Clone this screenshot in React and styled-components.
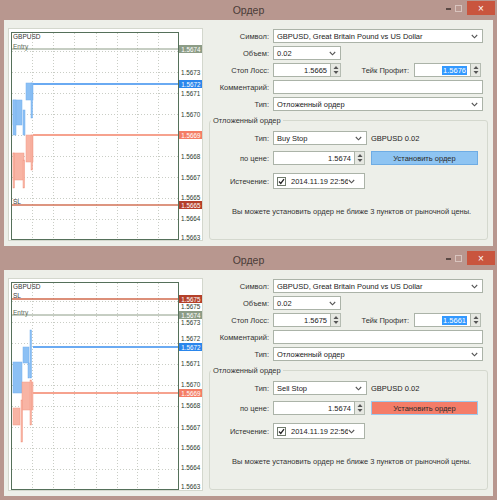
import React from "react";
import styled, { createGlobalStyle } from "styled-components";

const GlobalStyle = createGlobalStyle`
  html, body { margin: 0; padding: 0; background: #b8978f; }
  body { font-family: "Liberation Sans", Arial, sans-serif; font-size: 7.5px; color: #333; }
`;

const Screen = styled.div`
  width: 497px;
  height: 500px;
  display: flex;
  flex-direction: column;
  overflow: hidden;
`;

const Window = styled.div`
  height: 250px;
  display: flex;
  flex-direction: column;
  background: #b8978f;
`;

const TitleBar = styled.div`
  height: 20px;
  flex-shrink: 0;
  display: grid;
  grid-template-columns: 1fr auto 1fr;
  align-items: center;
`;

const Title = styled.span`
  grid-column: 2;
  font-size: 10.5px;
  color: #4a3b37;
`;

const Controls = styled.div`
  justify-self: end;
  align-self: start;
  display: flex;
  margin-top: 1px;
  padding-right: 2px;
`;

const CtlBox = styled.div`
  width: ${(p) => p.$w}px;
  height: 14px;
  display: flex;
  align-items: center;
  justify-content: center;
  background: ${(p) => p.$bg || "transparent"};
  color: #fff;
  font-size: 10px;
  margin-left: ${(p) => p.$ml || 0}px;
`;

const MinGlyph = styled.div`
  width: 5px;
  height: 2px;
  background: #5a4844;
  margin-top: 2px;
`;

const MaxGlyph = styled.div`
  width: 5px;
  height: 5px;
  border: 1px solid #d8c4be;
`;

const Body = styled.div`
  flex: 1;
  margin: 0 4px 4px;
  background: #edefe9;
  display: flex;
  gap: 4px;
  padding: 8px 4px 5px;
  box-sizing: border-box;
  min-height: 0;
`;

const ChartPanel = styled.div`
  width: 195px;
  flex-shrink: 0;
  background: #fff;
  border: 1px solid #d3d7cd;
  box-sizing: border-box;
  overflow: hidden;
`;

const Form = styled.div`
  flex: 1;
  display: flex;
  flex-direction: column;
  gap: 3px;
  padding-top: 1px;
  min-width: 0;
`;

const Row = styled.div`
  display: grid;
  grid-template-columns: ${(p) => p.$label}px 1fr;
  column-gap: 4px;
  align-items: center;
  height: ${(p) => p.$h || 14}px;
  margin-top: ${(p) => p.$mt || 0}px;
`;

const Label = styled.span`
  text-align: right;
  white-space: nowrap;
  color: #333;
`;

const Inline = styled.div`
  display: flex;
  align-items: center;
  height: 100%;
  width: ${(p) => (p.$w ? `${p.$w}px` : "auto")};
`;

const Select = styled.div`
  width: ${(p) => p.$w}px;
  height: 14px;
  box-sizing: border-box;
  border: 1px solid #abb3a8;
  background: #fff;
  display: flex;
  align-items: center;
  justify-content: space-between;
  padding: 0 4px 0 3px;
  color: #222;
`;

const NumberBox = styled.div`
  display: flex;
  height: 14px;
  width: ${(p) => p.$w}px;
`;

const NumberInput = styled.div`
  flex: 1;
  box-sizing: border-box;
  border: 1px solid #abb3a8;
  background: #fff;
  display: flex;
  align-items: center;
  justify-content: flex-end;
  padding-right: 3px;
  color: #222;
`;

const Selected = styled.span`
  background: #3399ff;
  color: #fff;
  padding: 0 1px;
  line-height: 9px;
`;

const Spinner = styled.div`
  width: 10px;
  box-sizing: border-box;
  border: 1px solid #b5bcb2;
  border-left: none;
  background: #e6e8e2;
  display: flex;
  align-items: center;
  justify-content: center;
`;

const TextBox = styled.div`
  width: ${(p) => p.$w}px;
  height: 14px;
  box-sizing: border-box;
  border: 1px solid #abb3a8;
  background: #fff;
`;

const TpLabel = styled.span`
  flex: 1;
  text-align: right;
  padding-right: 5px;
  white-space: nowrap;
`;

const Note = styled.span`
  margin-left: 4px;
  white-space: nowrap;
  color: #222;
`;

const Group = styled.fieldset`
  flex: 1;
  margin: 2px 1px 1px 2px;
  padding: 0;
  border: 1px solid #d4d8ce;
  border-radius: 3px;
  min-width: 0;
  display: flex;
  flex-direction: column;
`;

const Legend = styled.legend`
  padding: 0 2px;
  margin-left: 1px;
  color: #333;
  line-height: 9px;
`;

const GroupBody = styled.div`
  display: flex;
  flex-direction: column;
  padding-top: 6px;
`;

const OrderButton = styled.div`
  width: 107px;
  height: 14px;
  margin-left: 6px;
  box-sizing: border-box;
  border: 1px solid ${(p) => (p.$sell ? "#9cc8ec" : "#6eace4")};
  background: ${(p) => (p.$sell ? "#f47c68" : "#8ec4f2")};
  display: flex;
  align-items: center;
  justify-content: center;
  color: #2a2a2a;
`;

const DateField = styled.div`
  width: 92px;
  height: 16px;
  box-sizing: border-box;
  border: 1px solid #abb3a8;
  background: #fff;
  display: flex;
  align-items: center;
  padding-left: 3px;
`;

const CheckBox = styled.div`
  width: 9px;
  height: 9px;
  box-sizing: border-box;
  border: 1px solid #6f7a6c;
  background: #fff;
  display: flex;
  align-items: center;
  justify-content: center;
  flex-shrink: 0;
`;

const DateText = styled.span`
  width: 57px;
  margin-left: 5px;
  overflow: hidden;
  white-space: nowrap;
  color: #222;
`;

const Hint = styled.div`
  margin-top: 18px;
  padding-left: 22px;
  white-space: nowrap;
  color: #333;
`;

const Chevron = () => (
  <svg width="7" height="5" viewBox="0 0 7 5">
    <polyline points="0.8,1 3.5,3.8 6.2,1" fill="none" stroke="#555" strokeWidth="1.1" />
  </svg>
);

const SpinGlyph = () => (
  <svg width="6" height="10" viewBox="0 0 6 10">
    <polygon points="3,1 5.5,4 0.5,4" fill="#555" />
    <polygon points="0.5,6 5.5,6 3,9" fill="#555" />
  </svg>
);

const Check = () => (
  <svg width="7" height="7" viewBox="0 0 7 7">
    <polyline points="1,3.5 2.8,5.4 6,1.2" fill="none" stroke="#222" strokeWidth="1.3" />
  </svg>
);

// chart coordinates are written in window pixels, shifted to the svg origin here
const OX = 9;
const OY = 29;

function Chart({ data }) {
  const vx = [32, 53, 74, 96, 117, 137, 158];
  const hy = [51, 72, 93, 114, 135, 156, 177, 198, 219];
  return (
    <svg width="193" height="211" viewBox="0 0 193 211" style={{ display: "block" }}>
      {vx.map((x) => (
        <line key={"v" + x} x1={x - OX + 0.5} y1={4} x2={x - OX + 0.5} y2={210} stroke="#c9cdc5" strokeWidth="1" strokeDasharray="1 2" />
      ))}
      {hy.map((y) => (
        <line key={"h" + y} x1={3} y1={y - OY + 0.5} x2={169} y2={y - OY + 0.5} stroke="#c9cdc5" strokeWidth="1" strokeDasharray="1 2" />
      ))}
      {data.blue.map(([x, y, w, h], i) => (
        <rect key={"b" + i} x={x - OX} y={y - OY} width={w} height={h} fill="#8cc0f4" stroke="#74b0ee" strokeWidth="0.5" />
      ))}
      {data.red.map(([x, y, w, h], i) => (
        <rect key={"r" + i} x={x - OX} y={y - OY} width={w} height={h} fill="#f8b4a4" stroke="#f29a86" strokeWidth="0.5" />
      ))}
      {data.lines.map((l, i) => (
        <line key={"l" + i} x1={l.x1 - OX} y1={l.y - OY} x2={170} y2={l.y - OY} stroke={l.color} strokeWidth={l.w} />
      ))}
      <rect x={2.5} y={3.5} width={167} height={207} fill="none" stroke="#55705a" strokeWidth="1" />
      {data.marks.map(([t, y, c]) => (
        <text key={t} x={4} y={y - OY} fontSize="6.5" fill={c} dominantBaseline="central">
          {t}
        </text>
      ))}
      {data.ticks.map(([t, y], i) => (
        <text key={"t" + i} x={172} y={y - OY} fontSize="6.3" fill="#2d3b2d" dominantBaseline="central">
          {t}
        </text>
      ))}
      {data.tags.map(([t, y, c]) => (
        <g key={"g" + t}>
          <rect x={170} y={y - OY - 4} width={24} height={8} fill={c} />
          <text x={182} y={y - OY} fontSize="6.3" fill="#fff" textAnchor="middle" dominantBaseline="central">
            {t}
          </text>
        </g>
      ))}
    </svg>
  );
}

const buyChart = {
  marks: [
    ["GBPUSD", 36, "#333"],
    ["Entry", 46, "#5c6c5a"],
    ["SL", 201, "#3a3a3a"],
  ],
  lines: [
    { y: 49, x1: 11, color: "#8c9c86", w: 1 },
    { y: 84, x1: 33, color: "#6aaaf2", w: 2 },
    { y: 135, x1: 33, color: "#f6a28e", w: 2 },
    { y: 205, x1: 11, color: "#d27256", w: 1.5 },
  ],
  ticks: [
    ["1.5673", 72],
    ["1.5671", 93],
    ["1.5670", 114],
    ["1.5668", 156],
    ["1.5667", 177],
    ["1.5665", 197],
    ["1.5664", 218],
    ["1.5663", 237],
  ],
  tags: [
    ["1.5674", 49, "#8c9c86"],
    ["1.5672", 84, "#2a86ec"],
    ["1.5669", 135, "#f47e66"],
    ["1.5665", 205, "#b4402a"],
  ],
  blue: [
    [26, 83, 7, 17],
    [31, 83, 1.5, 35],
    [13, 100, 9, 25],
    [13, 100, 3, 35],
    [23, 110, 2, 25],
  ],
  red: [
    [26, 135, 7, 27],
    [31, 135, 1.5, 35],
    [13, 153, 11, 27],
    [13, 153, 1.5, 35],
    [23, 160, 1.5, 28],
  ],
};

const sellChart = {
  marks: [
    ["GBPUSD", 36, "#333"],
    ["SL", 45, "#3a3a3a"],
    ["Entry", 62, "#5c6c5a"],
  ],
  lines: [
    { y: 49, x1: 11, color: "#d06a4c", w: 1.5 },
    { y: 65, x1: 11, color: "#8c9c86", w: 1 },
    { y: 97, x1: 33, color: "#6aaaf2", w: 2 },
    { y: 143, x1: 33, color: "#f6a28e", w: 2 },
  ],
  ticks: [
    ["1.5675", 56.5],
    ["1.5673", 72],
    ["1.5672", 88.5],
    ["1.5671", 113],
    ["1.5670", 134],
    ["1.5668", 155],
    ["1.5667", 177],
    ["1.5666", 197],
    ["1.5664", 217],
    ["1.5663", 236],
  ],
  tags: [
    ["1.5675", 49, "#b4402a"],
    ["1.5674", 65, "#8c9c86"],
    ["1.5672", 97, "#2a86ec"],
    ["1.5669", 143, "#f47e66"],
  ],
  blue: [
    [30, 80, 1.5, 48],
    [23, 97, 6, 16],
    [13, 112, 9, 31],
    [28, 113, 1.5, 15],
  ],
  red: [
    [22, 132, 11, 28],
    [30, 130, 1.5, 45],
    [13, 158, 7, 17],
    [21, 150, 1.5, 42],
  ],
};

function OrderWindow({ chart, sl, tp, type, sell }) {
  return (
    <Window>
      <TitleBar>
        <Title>Ордер</Title>
        <Controls>
          <CtlBox $w={10}>
            <MinGlyph />
          </CtlBox>
          <CtlBox $w={10}>
            <MaxGlyph />
          </CtlBox>
          <CtlBox $w={28} $ml={4} $bg="#c9553e">
            ×
          </CtlBox>
        </Controls>
      </TitleBar>
      <Body>
        <ChartPanel>
          <Chart data={chart} />
        </ChartPanel>
        <Form>
          <Row $label={62}>
            <Label>Символ:</Label>
            <Select $w={210}>
              GBPUSD, Great Britain Pound vs US Dollar
              <Chevron />
            </Select>
          </Row>
          <Row $label={62}>
            <Label>Объем:</Label>
            <Select $w={68}>
              0.02
              <Chevron />
            </Select>
          </Row>
          <Row $label={62}>
            <Label>Стоп Лосс:</Label>
            <Inline $w={208}>
              <NumberBox $w={68}>
                <NumberInput>{sl}</NumberInput>
                <Spinner>
                  <SpinGlyph />
                </Spinner>
              </NumberBox>
              <TpLabel>Тейк Профит:</TpLabel>
              <NumberBox $w={67}>
                <NumberInput>
                  <Selected>{tp}</Selected>
                </NumberInput>
                <Spinner>
                  <SpinGlyph />
                </Spinner>
              </NumberBox>
            </Inline>
          </Row>
          <Row $label={62}>
            <Label>Комментарий:</Label>
            <TextBox $w={210} />
          </Row>
          <Row $label={62}>
            <Label>Тип:</Label>
            <Select $w={210}>
              Отложенный ордер
              <Chevron />
            </Select>
          </Row>
          <Group>
            <Legend>Отложенный ордер</Legend>
            <GroupBody>
              <Row $label={59}>
                <Label>Тип:</Label>
                <Inline>
                  <Select $w={94}>
                    {type}
                    <Chevron />
                  </Select>
                  <Note>GBPUSD 0.02</Note>
                </Inline>
              </Row>
              <Row $label={59} $mt={6}>
                <Label>по цене:</Label>
                <Inline>
                  <NumberBox $w={92}>
                    <NumberInput>1.5674</NumberInput>
                    <Spinner>
                      <SpinGlyph />
                    </Spinner>
                  </NumberBox>
                  <OrderButton $sell={sell}>Установить ордер</OrderButton>
                </Inline>
              </Row>
              <Row $label={59} $h={16} $mt={8}>
                <Label>Истечение:</Label>
                <DateField>
                  <CheckBox>
                    <Check />
                  </CheckBox>
                  <DateText>2014.11.19 22:56</DateText>
                  <Chevron />
                </DateField>
              </Row>
              <Hint>Вы можете установить ордер не ближе 3 пунктов от рыночной цены.</Hint>
            </GroupBody>
          </Group>
        </Form>
      </Body>
    </Window>
  );
}

export default function App() {
  return (
    <>
      <GlobalStyle />
      <Screen>
        <OrderWindow chart={buyChart} sl="1.5665" tp="1.5676" type="Buy Stop" />
        <OrderWindow chart={sellChart} sl="1.5675" tp="1.5661" type="Sell Stop" sell />
      </Screen>
    </>
  );
}
